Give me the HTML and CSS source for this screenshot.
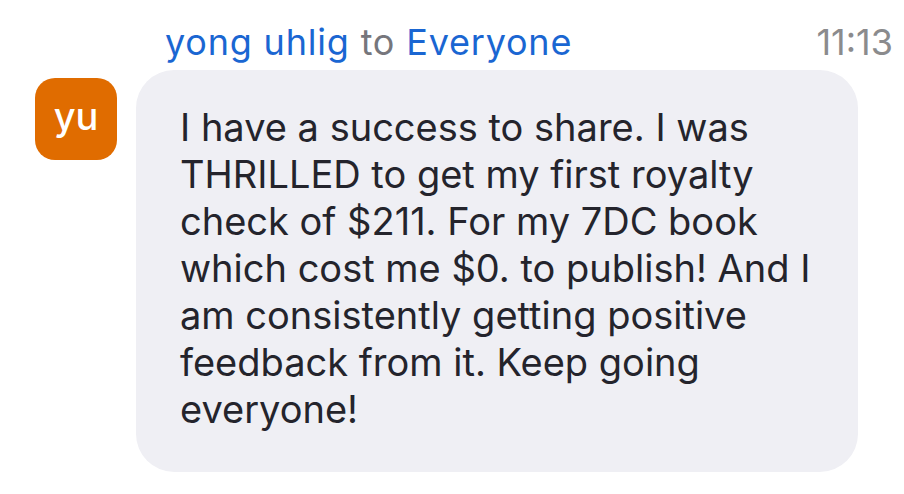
FILE: index.html
```html
<!DOCTYPE html>
<html>
<head>
<meta charset="utf-8">
<link rel="stylesheet" href="styles.css">
</head>
<body>
<div class="chat">
  <div class="meta">
    <div class="from"><span class="name">yong uhlig</span> <span class="to">to</span> <span class="name">Everyone</span></div>
    <div class="time">11:13</div>
  </div>
  <div class="row">
    <div class="avatar">yu</div>
    <div class="bubble">I have a success to share. I was THRILLED to get my first royalty check of $211. For my 7DC book which cost me $0. to publish! And I am consistently getting positive feedback from it. Keep going everyone!</div>
  </div>
</div>
</body>
</html>
```
FILE: styles.css
```css
html, body {
  margin: 0;
  padding: 0;
  background: #ffffff;
}
.chat {
  width: 904px;
  height: 494px;
  box-sizing: border-box;
  padding: 20px 11px 0 35px;
  font-family: Inter, "Noto Sans", sans-serif;
}
.meta {
  display: flex;
  justify-content: space-between;
  align-items: baseline;
  padding-left: 130px;
  height: 50px;
}
.from {
  font-size: 36px;
  letter-spacing: 0.8px;
  line-height: 42px;
}
.name { color: #1a66d2; }
.to { color: #76767c; }
.time {
  font-size: 36px;
  color: #8b8b8d;
  letter-spacing: 0;
}
.row {
  display: flex;
  align-items: flex-start;
  gap: 19px;
}
.avatar {
  width: 82px;
  height: 82px;
  margin-top: 8px;
  border-radius: 20px;
  background: #e06c00;
  color: #fff;
  font-size: 38px;
  font-weight: 500;
  display: flex;
  align-items: center;
  justify-content: center;
  line-height: 1;
  padding-bottom: 6px;
  box-sizing: border-box;
}
.bubble {
  width: 722px;
  height: 402px;
  box-sizing: border-box;
  background: #efeff4;
  border-radius: 38px;
  padding: 34px 40px 0 44px;
  font-size: 38px;
  line-height: 47px;
  color: #24242c;
}
```
